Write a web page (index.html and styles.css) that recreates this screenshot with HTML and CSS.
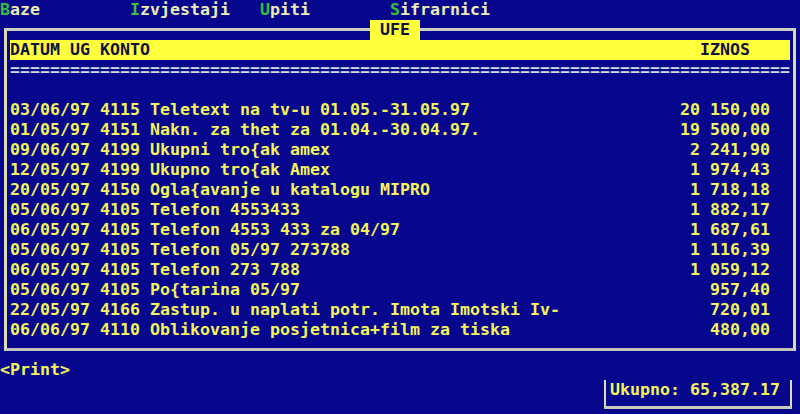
FILE: index.html
```html
<!DOCTYPE html>
<html lang="hr">

<head>
  <meta charset="UTF-8">
  <title>UFE - Pregled</title>
  <link rel="stylesheet" href="styles.css">
</head>

<body>
  <nav class="menu">
    <span class="menu-item"><b>B</b>aze</span>
    <span class="menu-item"><b>I</b>zvjestaji</span>
    <span class="menu-item"><b>U</b>piti</span>
    <span class="menu-item"><b>S</b>ifrarnici</span>
  </nav>

  <main class="frame">
    <div class="tab">UFE</div>
    <div class="head">
      <span>DATUM UG KONTO</span>
      <span class="head-iznos">IZNOS</span>
    </div>
    <div class="line">==============================================================================</div>
    <div class="blank"></div>

    <div class="row"><span class="opis">03/06/97 4115 Teletext na tv-u 01.05.-31.05.97</span><span class="iznos">20 150,00</span></div>
    <div class="row"><span class="opis">01/05/97 4151 Nakn. za thet za 01.04.-30.04.97.</span><span class="iznos">19 500,00</span></div>
    <div class="row"><span class="opis">09/06/97 4199 Ukupni tro{ak amex</span><span class="iznos">2 241,90</span></div>
    <div class="row"><span class="opis">12/05/97 4199 Ukupno tro{ak Amex</span><span class="iznos">1 974,43</span></div>
    <div class="row"><span class="opis">20/05/97 4150 Ogla{avanje u katalogu MIPRO</span><span class="iznos">1 718,18</span></div>
    <div class="row"><span class="opis">05/06/97 4105 Telefon 4553433</span><span class="iznos">1 882,17</span></div>
    <div class="row"><span class="opis">06/05/97 4105 Telefon 4553 433 za 04/97</span><span class="iznos">1 687,61</span></div>
    <div class="row"><span class="opis">05/06/97 4105 Telefon 05/97 273788</span><span class="iznos">1 116,39</span></div>
    <div class="row"><span class="opis">06/05/97 4105 Telefon 273 788</span><span class="iznos">1 059,12</span></div>
    <div class="row"><span class="opis">05/06/97 4105 Po{tarina 05/97</span><span class="iznos">957,40</span></div>
    <div class="row"><span class="opis">22/05/97 4166 Zastup. u naplati potr. Imota Imotski Iv-</span><span class="iznos">720,01</span></div>
    <div class="row"><span class="opis">06/06/97 4110 Oblikovanje posjetnica+film za tiska</span><span class="iznos">480,00</span></div>
  </main>

  <div class="print">&lt;Print&gt;</div>

  <footer class="total-bar">
    <div class="total">Ukupno: 65,387.17</div>
  </footer>
</body>

</html>
```

FILE: styles.css
```css
:root {
  --bg: #07078e;
  --text: #f4f45a;
  --menu-text: #ececb4;
  --hot: #2ec43a;
  --bar: #ffff3c;
  --bar-text: #12123a;
  --frame: #dcdcb0;
}

body {
  margin: 0;
  width: 800px;
  height: 414px;
  overflow: hidden;
  background: var(--bg);
  color: var(--text);
  font-family: "DejaVu Sans Mono", "Liberation Mono", monospace;
  font-weight: bold;
  font-size: 16.61px;
  line-height: 20px;
}

.menu {
  display: flex;
  height: 20px;
  color: var(--menu-text);
}

.menu-item {
  width: 130px;
}

.menu-item b {
  color: var(--hot);
}

.frame {
  position: relative;
  margin: 8px 4px 0 4px;
  padding: 9px 3px 8px 3px;
  border: 3px solid var(--frame);
  border-top-color: #cfcfc4;
  border-bottom-color: #c4c4bc;
}

.tab {
  position: absolute;
  top: -11px;
  left: 363px;
  width: 50px;
  height: 20px;
  background: var(--bar);
  color: var(--bar-text);
  text-align: center;
}

.head {
  display: flex;
  justify-content: space-between;
  height: 20px;
  background: var(--bar);
  color: var(--bar-text);
}

.head-iznos {
  margin-right: 40px;
}

.line {
  height: 20px;
  overflow: hidden;
  color: #dadada;
}

.blank {
  height: 20px;
}

.row {
  display: flex;
  height: 20px;
  padding-right: 20px;
  white-space: pre;
}

.opis {
  flex: 1;
}

.iznos {
  text-align: right;
}

.print {
  margin-top: 9px;
  height: 20px;
}

.total-bar {
  display: flex;
  justify-content: flex-end;
}

.total {
  margin-right: 8px;
  padding: 0 10px 6px 4px;
  border: 2px solid var(--frame);
  border-top: none;
  border-bottom: 3px solid #c8c8bc;
}
```
